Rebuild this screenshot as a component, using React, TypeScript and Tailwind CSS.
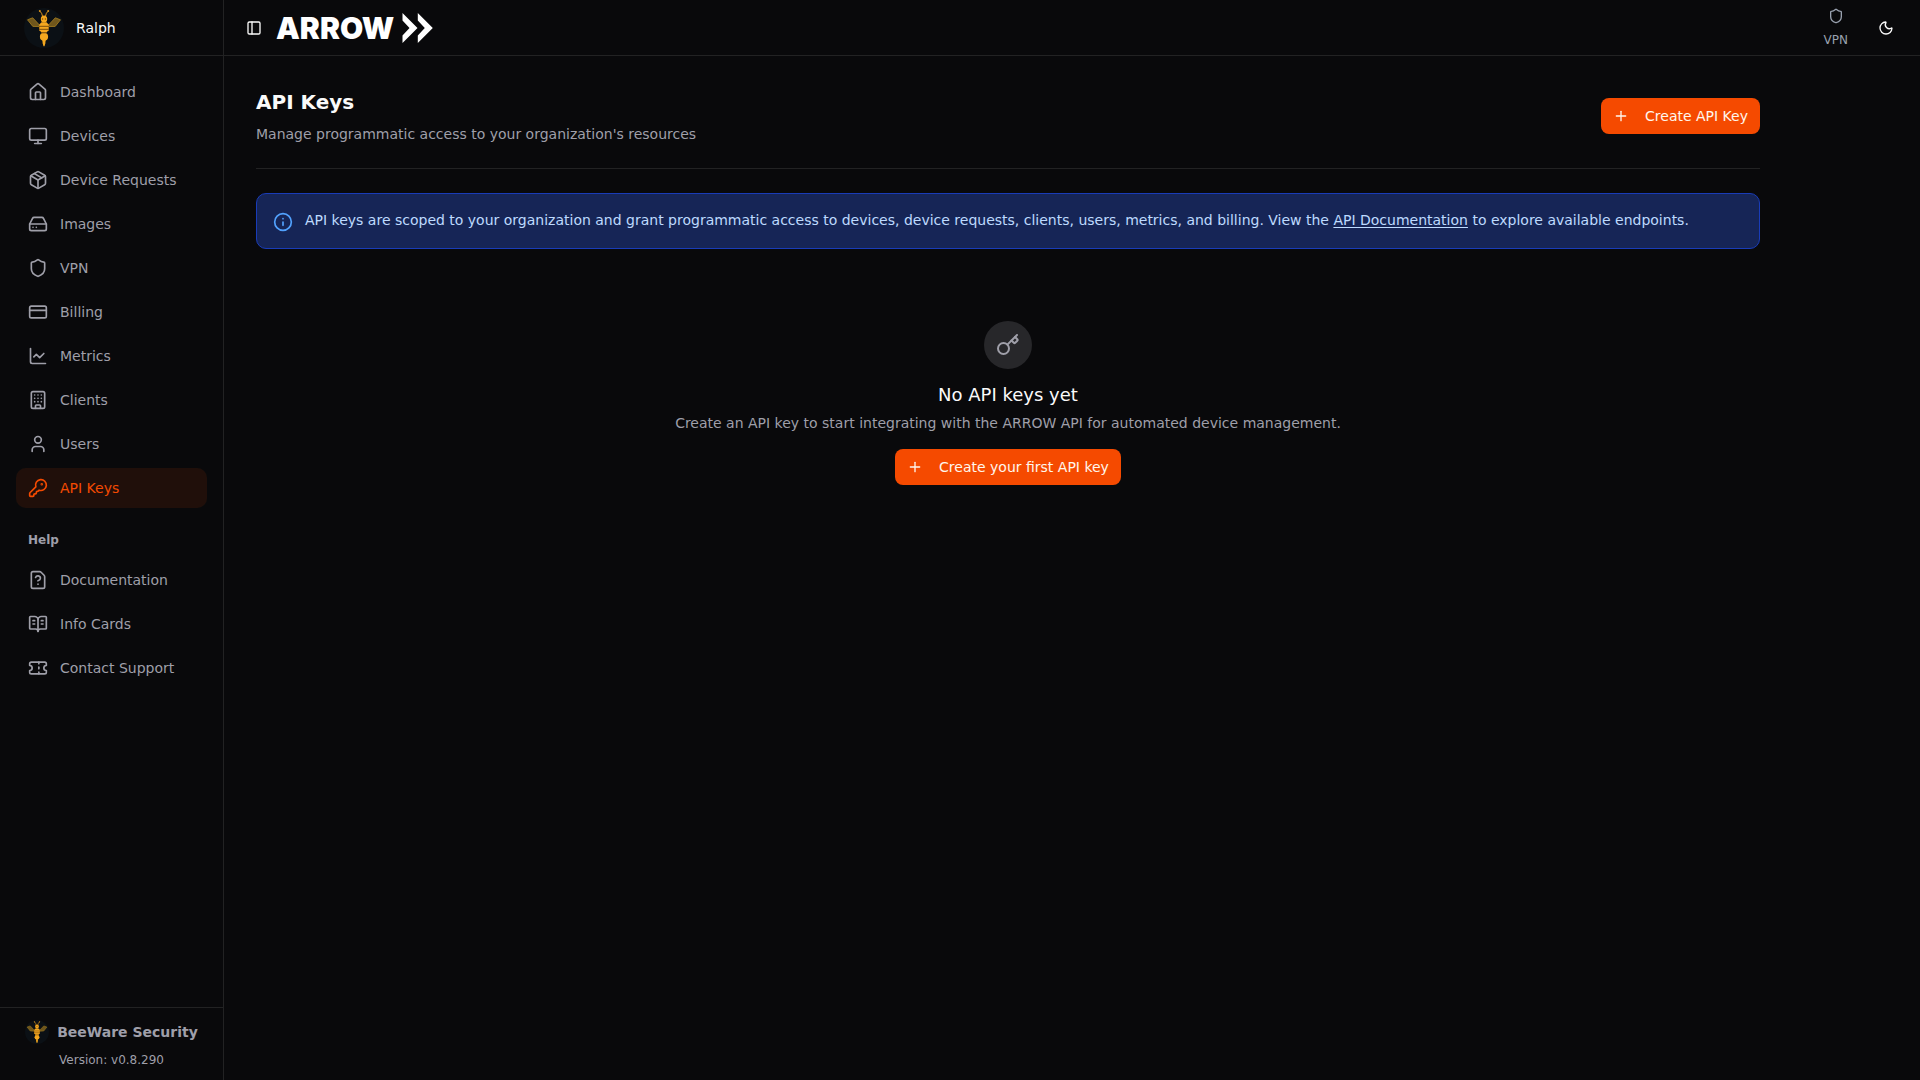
import type { LucideIcon } from 'lucide-react'
import {
  BookOpenText,
  Building,
  ChartLine,
  CreditCard,
  FileQuestionMark,
  HardDrive,
  House,
  Info,
  Key,
  KeyRound,
  Monitor,
  Moon,
  Package,
  PanelLeft,
  Plus,
  Shield,
  Ticket,
  User,
} from 'lucide-react'

type NavItem = { href: string; label: string; icon: LucideIcon }

const navItems: NavItem[] = [
  { href: '#dashboard', label: 'Dashboard', icon: House },
  { href: '#devices', label: 'Devices', icon: Monitor },
  { href: '#device-requests', label: 'Device Requests', icon: Package },
  { href: '#images', label: 'Images', icon: HardDrive },
  { href: '#vpn', label: 'VPN', icon: Shield },
  { href: '#billing', label: 'Billing', icon: CreditCard },
  { href: '#metrics', label: 'Metrics', icon: ChartLine },
  { href: '#clients', label: 'Clients', icon: Building },
  { href: '#users', label: 'Users', icon: User },
  { href: '#api-keys', label: 'API Keys', icon: KeyRound },
]

const helpItems: NavItem[] = [
  { href: '#documentation', label: 'Documentation', icon: FileQuestionMark },
  { href: '#info-cards', label: 'Info Cards', icon: BookOpenText },
  { href: '#support', label: 'Contact Support', icon: Ticket },
]

const activeHref = '#api-keys'

function BeeLogo({ className }: { className: string }) {
  return (
    <svg viewBox="0 0 40 40" className={className} aria-hidden="true">
      <circle cx="20" cy="20" r="20" fill="#0b1015" />
      <g fill="#6f561c" stroke="#a8801f" strokeWidth="0.8" strokeLinejoin="round">
        <path d="M3.5 11.8 8.7 9.8 15.6 17.2 15 18.6 8.8 18.4Z" />
        <path d="M36.5 11.8 31.3 9.8 24.4 17.2 25 18.6 31.2 18.4Z" />
      </g>
      <g fill="none" stroke="#d9931c" strokeWidth="1">
        <path d="M18.6 8.5 17.6 5.2 15.8 3.2" />
        <path d="M21.4 8.5 22.4 5.2 24.2 3.2" />
      </g>
      <g fill="#d9931c">
        <circle cx="15.8" cy="3" r="1" />
        <circle cx="24.2" cy="3" r="1" />
      </g>
      <g fill="#f5a81f">
        <ellipse cx="20" cy="11" rx="3.2" ry="3.6" />
        <path d="M17.5 14.2h5l2.4 2.6-.3 5.4-2.4 2.6h-4.4l-2.4-2.6-.3-5.4Z" />
        <ellipse cx="20" cy="28.8" rx="4.1" ry="4.1" />
        <path d="M18.3 32h3.4l-.4 3.4-.8 2.800h-1l-.8-2.800Z" />
      </g>
      <g stroke="#7a4d0c" strokeWidth="1">
        <path d="M15 18.3h10M15.2 21.3h9.6M17.4 24.8h5.2" />
      </g>
      <circle cx="18.6" cy="11" r="0.7" fill="#7a4d0c" />
      <circle cx="21.4" cy="11" r="0.7" fill="#7a4d0c" />
    </svg>
  )
}

function ArrowLogo() {
  return (
    <a href="#dashboard" className="flex items-center gap-2 text-white">
      <span className="font-[Inter,sans-serif] text-[30px] leading-8 font-black">ARROW</span>
      <svg viewBox="0 0 31 30" className="h-[30px] w-[31px]" fill="currentColor" aria-hidden="true">
        <path d="M.5 0 15.500 15 .5 30V22.500L7.500 15 .5 7.500Z" />
        <path d="M15.800 0 30.800 15 15.800 30V22.500L22.800 15 15.800 7.500Z" />
      </svg>
    </a>
  )
}

function NavList({ items }: { items: NavItem[] }) {
  return (
    <ul className="flex flex-col gap-1">
      {items.map((item) => (
        <li key={item.href}>
          <a
            href={item.href}
            aria-current={item.href === activeHref ? 'page' : undefined}
            className={`flex h-10 items-center gap-3 rounded-[10px] px-3 text-sm ${
              item.href === activeHref
                ? 'bg-orange-600/10 text-orange-600'
                : 'text-[#9f9fa9] hover:bg-white/5'
            }`}
          >
            <item.icon className="size-5 shrink-0" />
            {item.label}
          </a>
        </li>
      ))}
    </ul>
  )
}

function CreateButton({ label }: { label: string }) {
  return (
    <button
      type="button"
      className="flex h-9 shrink-0 items-center gap-4 rounded-lg bg-orange-600 px-3 text-sm text-orange-50"
    >
      <Plus className="size-4" />
      {label}
    </button>
  )
}

function Sidebar() {
  return (
    <aside className="sticky top-0 flex h-screen w-56 shrink-0 flex-col border-r border-white/10">
      <div className="flex h-14 shrink-0 items-center gap-3 border-b border-white/10 px-6">
        <BeeLogo className="size-10" />
        <span className="text-sm text-neutral-50">Ralph</span>
      </div>

      <nav className="flex-1 overflow-y-auto p-4">
        <NavList items={navItems} />
        <h2 className="mt-6 mb-3 px-3 text-xs font-bold text-[#9f9fa9]">Help</h2>
        <NavList items={helpItems} />
      </nav>

      <footer className="flex flex-col items-center gap-2 border-t border-white/10 py-3 text-[#9f9fa9]">
        <div className="flex items-center gap-2">
          <BeeLogo className="size-6" />
          <span className="text-sm font-bold">BeeWare Security</span>
        </div>
        <p className="text-xs">Version: v0.8.290</p>
      </footer>
    </aside>
  )
}

function TopBar() {
  return (
    <header className="flex h-14 items-center justify-between border-b border-white/10 px-4">
      <div className="flex items-center gap-2">
        <button type="button" aria-label="Toggle sidebar" className="p-1.5 text-neutral-50">
          <PanelLeft className="size-4" />
        </button>
        <ArrowLogo />
      </div>
      <div className="flex items-center gap-5">
        <a href="#vpn" className="flex flex-col items-center gap-2 text-xs text-gray-400">
          <Shield className="size-4" />
          VPN
        </a>
        <button
          type="button"
          aria-label="Toggle theme"
          className="flex size-9 items-center justify-center text-neutral-50"
        >
          <Moon className="size-4" />
        </button>
      </div>
    </header>
  )
}

export default function App() {
  return (
    <div className="flex min-h-screen bg-[#09090b] font-['DejaVu_Sans',sans-serif] text-neutral-50">
      <Sidebar />
      <div className="flex min-w-0 flex-1 flex-col">
        <TopBar />
        <main className="p-4">
          <div className="max-w-[1536px] p-4">
            <div className="mb-6 flex items-center justify-between gap-4 border-b border-white/10 pb-6">
              <div>
                <h1 className="text-xl font-bold">API Keys</h1>
                <p className="mt-2 text-sm text-[#9f9fa9]">
                  Manage programmatic access to your organization's resources
                </p>
              </div>
              <CreateButton label="Create API Key" />
            </div>

            <div className="mb-6 flex gap-3 rounded-[10px] border border-blue-800 bg-blue-950 p-4 text-blue-200">
              <Info className="mt-0.5 size-5 shrink-0 text-blue-400" />
              <p className="text-sm">
                API keys are scoped to your organization and grant programmatic access to devices, device
                requests, clients, users, metrics, and billing. View the{' '}
                <a href="#api-docs" className="underline underline-offset-2">
                  API Documentation
                </a>{' '}
                to explore available endpoints.
              </p>
            </div>

            <section className="flex flex-col items-center py-12 text-center">
              <div className="flex size-12 items-center justify-center rounded-full bg-zinc-800 text-[#9f9fa9]">
                <Key className="size-6" />
              </div>
              <h2 className="mt-3 text-lg">No API keys yet</h2>
              <p className="mt-1 mb-4 text-sm text-[#9f9fa9]">
                Create an API key to start integrating with the ARROW API for automated device management.
              </p>
              <CreateButton label="Create your first API key" />
            </section>
          </div>
        </main>
      </div>
    </div>
  )
}
